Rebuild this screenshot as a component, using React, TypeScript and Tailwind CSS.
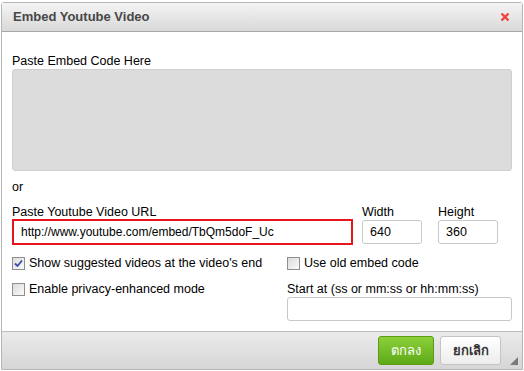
import { useState } from "react";

function Check({ checked }: { checked?: boolean }) {
  return (
    <span className="relative inline-flex h-[13px] w-[13px] shrink-0 items-center justify-center border border-[#8f8f8f] bg-gradient-to-br from-[#dcdcdc] to-[#fafafa]">
      {checked && (
        <svg viewBox="0 0 11 11" className="h-[11px] w-[11px]">
          <path d="M2 5.5 L4.5 8 L9 2.5" fill="none" stroke="#3b4aa8" strokeWidth="1.8" />
        </svg>
      )}
    </span>
  );
}

export default function App() {
  const [url, setUrl] = useState("http://www.youtube.com/embed/TbQm5doF_Uc");
  return (
    <div className="h-[371px] w-[524px] bg-white pl-[1px] pt-[2px] font-['Liberation_Sans',Arial,sans-serif] text-[12.5px] text-black">
      <div className="flex h-[368px] w-[522px] flex-col rounded-t-[3px] border border-[#b6b6b6] bg-white">
        <div className="flex h-[29px] shrink-0 items-center justify-between border-b border-[#a8a8a8] bg-gradient-to-b from-[#f4f4f4] to-[#d9d9d9] pl-[11px] pr-[12px]">
          <span className="text-[13px] font-bold text-[#474747]">Embed Youtube Video</span>
          <svg viewBox="0 0 10 10" className="h-[10px] w-[10px]">
            <path d="M1.5 1.5 L8.5 8.5 M8.5 1.5 L1.5 8.5" stroke="#f0423f" strokeWidth="2.4" />
          </svg>
        </div>

        <div className="flex flex-1 flex-col px-[10px] pt-[22px]">
          <label className="leading-[15px]">Paste Embed Code Here</label>
          <div className="h-[102px] w-[500px] rounded-[3px] border border-[#cfcfcf] bg-[#dcdcdc]" />
          <div className="mt-[9px] leading-[15px]">or</div>

          <div className="mt-[10px] flex gap-[9px]">
            <div className="flex flex-col">
              <label className="leading-[15px]">Paste Youtube Video URL</label>
              <input
                value={url}
                onChange={(e) => setUrl(e.target.value)}
                className="mt-[-1px] h-[26px] w-[341px] border-2 border-[#e8141c] bg-white px-[7px] text-[12px] outline-none"
              />
            </div>
            <div className="flex flex-col">
              <label className="leading-[15px]">Width</label>
              <input
                defaultValue="640"
                className="h-[24px] w-[60px] rounded-[3px] border border-[#c8c8c8] px-[7px] text-[12.5px] outline-none"
              />
            </div>
            <div className="ml-[7px] flex flex-col">
              <label className="leading-[15px]">Height</label>
              <input
                defaultValue="360"
                className="h-[24px] w-[60px] rounded-[3px] border border-[#c8c8c8] px-[7px] text-[12.5px] outline-none"
              />
            </div>
          </div>

          <div className="mt-[11px] grid grid-cols-[275px_1fr]">
            <div className="flex flex-col gap-[11px]">
              <label className="flex items-center gap-[4px] leading-[15px]">
                <Check checked />
                Show suggested videos at the video's end
              </label>
              <label className="flex items-center gap-[4px] leading-[15px]">
                <Check />
                Enable privacy-enhanced mode
              </label>
            </div>
            <div className="flex flex-col">
              <label className="flex items-center gap-[4px] leading-[15px]">
                <Check />
                Use old embed code
              </label>
              <label className="mt-[11px] leading-[15px]">Start at (ss or mm:ss or hh:mm:ss)</label>
              <input className="h-[24px] w-[225px] rounded-[3px] border border-[#c8c8c8] px-[7px] outline-none" />
            </div>
          </div>
        </div>

        <div className="relative flex h-[38px] shrink-0 items-center justify-end gap-[6px] border-t border-[#bdbdbd] bg-gradient-to-b from-[#ebebeb] to-[#d6d6d6] pr-[21px]">
          <button className="h-[29px] w-[56px] rounded-[3px] border border-[#5d9b12] bg-gradient-to-b from-[#8cd13b] to-[#5ea915] font-['Noto_Sans',sans-serif] text-[13px] font-medium text-white">
            ตกลง
          </button>
          <button className="h-[29px] w-[61px] rounded-[3px] border border-[#c4c4c4] bg-gradient-to-b from-white to-[#ededed] font-['Noto_Sans',sans-serif] text-[13px] font-semibold text-[#333]">
            ยกเลิก
          </button>
          <svg viewBox="0 0 8 8" className="absolute bottom-[4px] right-[4px] h-[8px] w-[8px]">
            <path d="M8 0 L8 8 L0 8 Z" fill="#7a7a7a" />
          </svg>
        </div>
      </div>
    </div>
  );
}
